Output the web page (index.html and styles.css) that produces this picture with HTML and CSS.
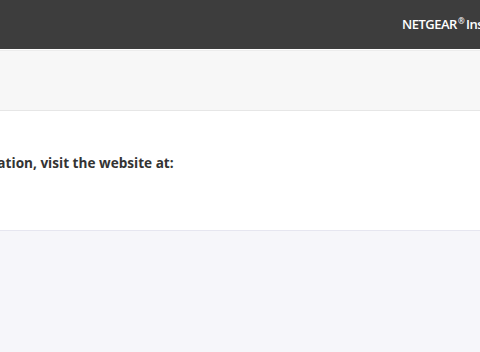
FILE: index.html
```html
<!DOCTYPE html>
<html>
<head>
<title>NETGEAR Insight</title>
<link rel="stylesheet" href="styles.css">
</head>
<body>
<div class="topbar"><span class="brand">NETGEAR<sup>®</sup> Insight</span></div>
<div class="subbar"></div>
<div class="panel">
	<p class="info">For more information, visit the website at:</p>
</div>
</body>
</html>
```
FILE: styles.css
```css
html, body { margin: 0; height: 100%; overflow: hidden; }
body { background: #f6f6fa; font-family: "Open Sans", sans-serif; }
.topbar { background: #3d3d3d; height: 49px; display: flex; align-items: center; border-bottom: 1px solid #fff; overflow: hidden; }
.brand { color: #fff; font-size: 13px; font-weight: 600; margin-left: 402px; white-space: nowrap; letter-spacing: -0.5px; word-spacing: -1px; }
.brand sup { font-size: 8px; margin-left: 1px; }
.subbar { height: 59px; background: #f7f7f7; border-top: 1px solid #ececec; }
.panel { background: #fff; border-top: 1px solid #e6e6e6; border-bottom: 1px solid #e6e6f0; height: 121px; box-sizing: border-box; padding-top: 42px; overflow: hidden; }
.info { margin: 0 0 0 -114px; font-size: 13.6px; font-weight: bold; color: #333; white-space: nowrap; }
```
